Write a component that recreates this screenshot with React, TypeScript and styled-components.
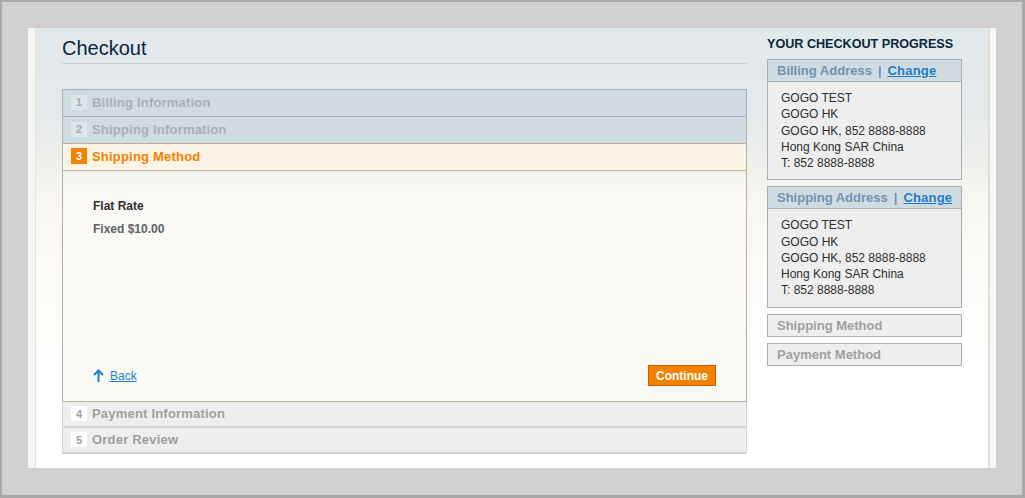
import * as React from "react";
import styled, { createGlobalStyle, css } from "styled-components";

const GlobalStyle = createGlobalStyle`
  html, body {
    margin: 0;
    padding: 0;
    background: #d1cfd0;
  }
  body {
    font-family: "Liberation Sans", Arial, sans-serif;
    font-size: 12px;
    color: #2f2f2f;
  }
`;

const Frame = styled.div`
  box-sizing: border-box;
  width: 1025px;
  height: 498px;
  border: 2px solid #a9a9a9;
  border-right-width: 3px;
  border-bottom-width: 3px;
  background: #d1cfd0;
  padding: 26px 0 0 26px;
`;

const Page = styled.div`
  display: flex;
  width: 968px;
  height: 440px;
  background: #fff;
`;

const Edge = styled.div<{ $side: "left" | "right" }>`
  width: 8px;
  flex: none;
  background: #f7f5f0;
  ${(p) =>
    p.$side === "left"
      ? css`
          box-shadow: inset -1px 0 0 #e4e2dd;
        `
      : css`
          box-shadow: inset 2px 0 1px #dedcd7;
          background: #faf8f4;
        `}
`;

const Main = styled.div`
  flex: 1;
  display: flex;
  gap: 20px;
  padding: 0 26px;
  background: linear-gradient(
    180deg,
    #e1e8eb 0px,
    #e5eaeb 90px,
    #eceeeb 130px,
    #f8f6f0 170px,
    #fcfbf8 240px,
    #ffffff 340px
  );
`;

const LeftCol = styled.div`
  width: 685px;
  padding-top: 8px;
`;

const Title = styled.h1`
  margin: 0;
  padding-bottom: 3px;
  border-bottom: 1px solid #cdd0d0;
  font-size: 20px;
  line-height: 24px;
  font-weight: normal;
  color: #0a263c;
`;

const Steps = styled.div`
  margin-top: 25px;
`;

type StepState = "done" | "active" | "todo";

const StepHead = styled.div<{ $state: StepState }>`
  display: flex;
  align-items: center;
  gap: 5px;
  padding-left: 8px;
  padding-bottom: 2px;
  box-sizing: border-box;

  ${(p) =>
    p.$state === "done" &&
    css`
      height: 27px;
      background: #d0dbe1;
      border: 1px solid #a8b4bc;
      border-bottom: none;
    `}
  ${(p) =>
    p.$state === "active" &&
    css`
      height: 28px;
      background: #fbf3e4;
      border: 1px solid #bbafa0;
    `}
  ${(p) =>
    p.$state === "todo" &&
    css`
      height: 26px;
      padding-bottom: 1px;
      background: #eeeeee;
      border: 1px solid #d6d6d6;
      border-top: none;
      border-bottom: 2px solid #d3d3d3;
    `}
`;

const StepNum = styled.span<{ $state: StepState }>`
  width: 16px;
  height: 15px;
  display: flex;
  align-items: center;
  justify-content: center;
  font-size: 11px;
  font-weight: bold;
  ${(p) =>
    p.$state === "done"
      ? css`
          background: #dde5e9;
          color: #a3abb1;
        `
      : p.$state === "active"
      ? css`
          height: 16px;
          background: #f18200;
          color: #fff;
        `
      : css`
          background: #fff;
          color: #a0a0a0;
        `}
`;

const StepName = styled.span<{ $state: StepState }>`
  font-size: 13px;
  font-weight: bold;
  letter-spacing: 0.2px;
  color: ${(p) =>
    p.$state === "done" ? "#a7b0b7" : p.$state === "active" ? "#f18200" : "#a0a0a0"};
`;

const StepBody = styled.div`
  box-sizing: border-box;
  height: 231px;
  display: flex;
  flex-direction: column;
  padding: 28px 30px 15px 30px;
  border: 1px solid #bbafa0;
  border-top: none;
  background: linear-gradient(180deg, #f2f0eb 0px, #faf9f6 22px, #faf9f6 100%);
`;

const MethodName = styled.div`
  font-weight: bold;
  line-height: 15px;
  color: #2f2f2f;
`;

const MethodPrice = styled.div`
  margin-top: 8px;
  font-weight: bold;
  line-height: 15px;
  color: #5f6266;
`;

const Buttons = styled.div`
  margin-top: auto;
  display: flex;
  align-items: center;
  justify-content: space-between;
`;

const BackLink = styled.a`
  display: flex;
  align-items: center;
  gap: 6px;
  color: #1e7ec8;
  text-decoration: underline;
  font-size: 12px;
  cursor: pointer;
`;

const ContinueButton = styled.button`
  box-sizing: border-box;
  width: 68px;
  height: 21px;
  padding: 0;
  border: 1px solid #de5400;
  background: #f18200;
  color: #fff;
  font-family: "Liberation Sans", Arial, sans-serif;
  font-size: 12px;
  font-weight: bold;
  cursor: pointer;
`;

const Sidebar = styled.div`
  width: 195px;
  padding-top: 9px;
`;

const SideTitle = styled.div`
  font-size: 12.6px;
  font-weight: bold;
  line-height: 15px;
  color: #0a263c;
  text-transform: uppercase;
  white-space: nowrap;
  margin-bottom: 7px;
`;

const ProgressBox = styled.div`
  border: 1px solid #a6afb5;
  background: #eeeeee;
  margin-bottom: 6px;
`;

const ProgressHead = styled.div`
  height: 21px;
  display: flex;
  align-items: center;
  padding-left: 9px;
  background: #d0dbe1;
  border-bottom: 1px solid #a6afb5;
  font-size: 13px;
  font-weight: bold;
  color: #7293b1;
  white-space: nowrap;
`;

const Pipe = styled.span`
  margin: 0 6px;
`;

const ChangeLink = styled.a`
  color: #1e7ec8;
  text-decoration: underline;
  letter-spacing: 0.2px;
  cursor: pointer;
`;

const ProgressBody = styled.address`
  font-style: normal;
  padding: 8px 10px 8px 13px;
  line-height: 16.25px;
  color: #2f2f2f;
`;

const ProgressPlain = styled.div`
  height: 21px;
  display: flex;
  align-items: center;
  padding-left: 9px;
  border: 1px solid #a8aeb2;
  background: #eeeeee;
  font-size: 13px;
  font-weight: bold;
  color: #a0a0a0;
  margin-bottom: 6px;
`;

const UpArrow = () => (
  <svg width="11" height="13" viewBox="0 0 11 13" fill="none">
    <path d="M5.5 1.5 V13" stroke="#1e7ec8" strokeWidth="2" />
    <path d="M1 6 L5.5 1.5 L10 6" stroke="#1e7ec8" strokeWidth="2" />
  </svg>
);

const steps: { n: number; name: string; state: StepState }[] = [
  { n: 1, name: "Billing Information", state: "done" },
  { n: 2, name: "Shipping Information", state: "done" },
  { n: 3, name: "Shipping Method", state: "active" },
  { n: 4, name: "Payment Information", state: "todo" },
  { n: 5, name: "Order Review", state: "todo" },
];

const address = [
  "GOGO TEST",
  "GOGO HK",
  "GOGO HK, 852 8888-8888",
  "Hong Kong SAR China",
  "T: 852 8888-8888",
];

const AddressBox = ({ label }: { label: string }) => (
  <ProgressBox>
    <ProgressHead>
      {label}
      <Pipe>|</Pipe>
      <ChangeLink>Change</ChangeLink>
    </ProgressHead>
    <ProgressBody>
      {address.map((line) => (
        <div key={line}>{line}</div>
      ))}
    </ProgressBody>
  </ProgressBox>
);

export default function App() {
  return (
    <>
      <GlobalStyle />
      <Frame>
        <Page>
          <Edge $side="left" />
          <Main>
            <LeftCol>
              <Title>Checkout</Title>
              <Steps>
                {steps.map((s) => (
                  <React.Fragment key={s.n}>
                    <StepHead $state={s.state}>
                      <StepNum $state={s.state}>{s.n}</StepNum>
                      <StepName $state={s.state}>{s.name}</StepName>
                    </StepHead>
                    {s.state === "active" && (
                      <StepBody>
                        <MethodName>Flat Rate</MethodName>
                        <MethodPrice>Fixed $10.00</MethodPrice>
                        <Buttons>
                          <BackLink>
                            <UpArrow />
                            Back
                          </BackLink>
                          <ContinueButton>Continue</ContinueButton>
                        </Buttons>
                      </StepBody>
                    )}
                  </React.Fragment>
                ))}
              </Steps>
            </LeftCol>
            <Sidebar>
              <SideTitle>Your Checkout Progress</SideTitle>
              <AddressBox label="Billing Address" />
              <AddressBox label="Shipping Address" />
              <ProgressPlain>Shipping Method</ProgressPlain>
              <ProgressPlain>Payment Method</ProgressPlain>
            </Sidebar>
          </Main>
          <Edge $side="right" />
        </Page>
      </Frame>
    </>
  );
}
